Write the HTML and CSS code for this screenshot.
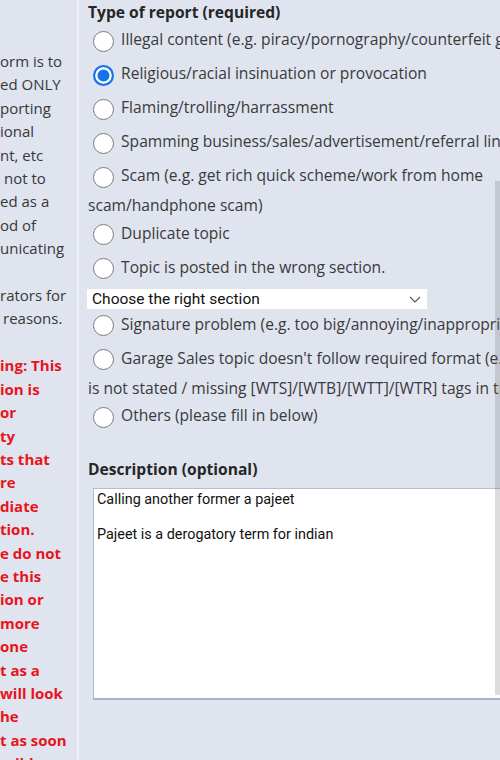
FILE: index.html
```html
<!DOCTYPE html>
<html lang="en">
<head>
<meta charset="utf-8">
<title>Report post</title>
<link rel="stylesheet" href="styles.css">
</head>
<body>
<div class="page">
  <aside class="side">
    <div class="ln">orm is to</div>
    <div class="ln">ed ONLY</div>
    <div class="ln">porting</div>
    <div class="ln">ional</div>
    <div class="ln">nt, etc</div>
    <div class="ln ind-l">not to</div>
    <div class="ln">ed as a</div>
    <div class="ln">od of</div>
    <div class="ln">unicating</div>
    <div class="ln">&nbsp;</div>
    <div class="ln">rators for</div>
    <div class="ln ind-s">reasons.</div>
    <div class="ln">&nbsp;</div>
    <div class="ln warn">ing: This</div>
    <div class="ln warn">ion is</div>
    <div class="ln warn">or</div>
    <div class="ln warn">ty</div>
    <div class="ln warn">ts that</div>
    <div class="ln warn">re</div>
    <div class="ln warn">diate</div>
    <div class="ln warn">tion.</div>
    <div class="ln warn">e do not</div>
    <div class="ln warn">e this</div>
    <div class="ln warn">ion or</div>
    <div class="ln warn">more</div>
    <div class="ln warn">one</div>
    <div class="ln warn">t as a</div>
    <div class="ln warn">will look</div>
    <div class="ln warn">he</div>
    <div class="ln warn">t as soon</div>
    <div class="ln warn">ssible.</div>
  </aside>
  <main class="main">
    <h3 class="heading">Type of report (required)</h3>
    <div class="options">
      <label class="opt"><input type="radio" name="type"> Illegal content (e.g. piracy/pornography/counterfeit goods)</label>
      <label class="opt"><input type="radio" name="type" checked> Religious/racial insinuation or provocation</label>
      <label class="opt"><input type="radio" name="type"> Flaming/trolling/harrassment</label>
      <label class="opt"><input type="radio" name="type"> Spamming business/sales/advertisement/referral links</label>
      <label class="opt"><input type="radio" name="type"> Scam (e.g. get rich quick scheme/work from home<br>scam/handphone scam)</label>
      <label class="opt"><input type="radio" name="type"> Duplicate topic</label>
      <label class="opt"><input type="radio" name="type"> Topic is posted in the wrong section.</label>
      <div class="select-wrap">
        <select class="section">
          <option>Choose the right section</option>
        </select>
        <svg class="chevron" width="12" height="7" viewBox="0 0 12 7"><path d="M1 1 L6 6 L11 1" fill="none" stroke="#555" stroke-width="1.1"/></svg>
      </div>
      <label class="opt"><input type="radio" name="type"> Signature problem (e.g. too big/annoying/inappropriate)</label>
      <label class="opt"><input type="radio" name="type"> Garage Sales topic doesn't follow required format (e.g. price<br>is not stated / missing [WTS]/[WTB]/[WTT]/[WTR] tags in title)</label>
      <label class="opt"><input type="radio" name="type"> Others (please fill in below)</label>
    </div>
    <h3 class="heading desc">Description (optional)</h3>
    <textarea class="desc-box">Calling another former a pajeet

Pajeet is a derogatory term for indian</textarea>
  </main>
</div>
<div class="scroll-thumb"></div>
</body>
</html>
```

FILE: styles.css
```css
html, body {
  margin: 0;
  padding: 0;
  overflow: hidden;
  background: #dfe4ef;
}

body {
  font-family: "Open Sans", "DejaVu Sans", sans-serif;
  font-size: 15.6px;
  line-height: 23.4px;
  color: #3a3a3a;
}

.page {
  display: flex;
  width: 700px;
  min-height: 760px;
}

.side {
  flex: none;
  width: 77px;
  border-right: 2px solid #eff1f6;
  overflow: hidden;
  padding-top: 50px;
  font-size: 15px;
  color: #383838;
}

.ln {
  white-space: nowrap;
}

.ind-l {
  padding-left: 4px;
}

.ind-s {
  padding-left: 3px;
}

.warn {
  color: #e8141c;
  font-weight: 700;
}

.main {
  flex: 1;
  padding: 1px 0 0 9px;
}

.heading {
  margin: 0;
  font-size: 15.6px;
  font-weight: 700;
  line-height: 23.4px;
  color: #262626;
}

.heading.desc {
  margin-top: 24px;
}

.opt {
  display: block;
  white-space: nowrap;
}

.opt input {
  appearance: none;
  -webkit-appearance: none;
  box-sizing: border-box;
  width: 21px;
  height: 21px;
  margin: 6.5px 3px 6.5px 5px;
  border: 1.5px solid #7b7b7b;
  border-radius: 50%;
  background: #fff;
  vertical-align: middle;
}

.opt input:checked {
  border: 2.5px solid #1273eb;
  background: #1273eb;
  box-shadow: inset 0 0 0 2.5px #fff;
}

.select-wrap {
  position: relative;
  width: 340px;
  height: 20px;
  margin: 3px 0 0 -1px;
}

.section {
  appearance: none;
  -webkit-appearance: none;
  display: block;
  width: 340px;
  height: 20px;
  border: 0;
  border-radius: 0;
  background: #fff;
  padding: 0 0 0 5px;
  font-family: Roboto, "Noto Sans", sans-serif;
  font-size: 15.5px;
  color: #111;
}

.chevron {
  position: absolute;
  left: 322px;
  top: 7px;
}

.desc-box {
  display: block;
  box-sizing: border-box;
  width: 480px;
  height: 212px;
  margin: 6px 0 0 5px;
  padding: 2px 3px;
  border: 1px solid #aac0d6;
  border-bottom: 2px solid #9eb4ca;
  background: #fff;
  font-family: Roboto, "Noto Sans", sans-serif;
  font-size: 14.4px;
  line-height: 17.5px;
  color: #111;
  resize: none;
  outline: none;
}

.scroll-thumb {
  position: fixed;
  right: 0;
  top: 181px;
  width: 5px;
  height: 514px;
  background: rgba(110, 110, 110, 0.24);
}
```
